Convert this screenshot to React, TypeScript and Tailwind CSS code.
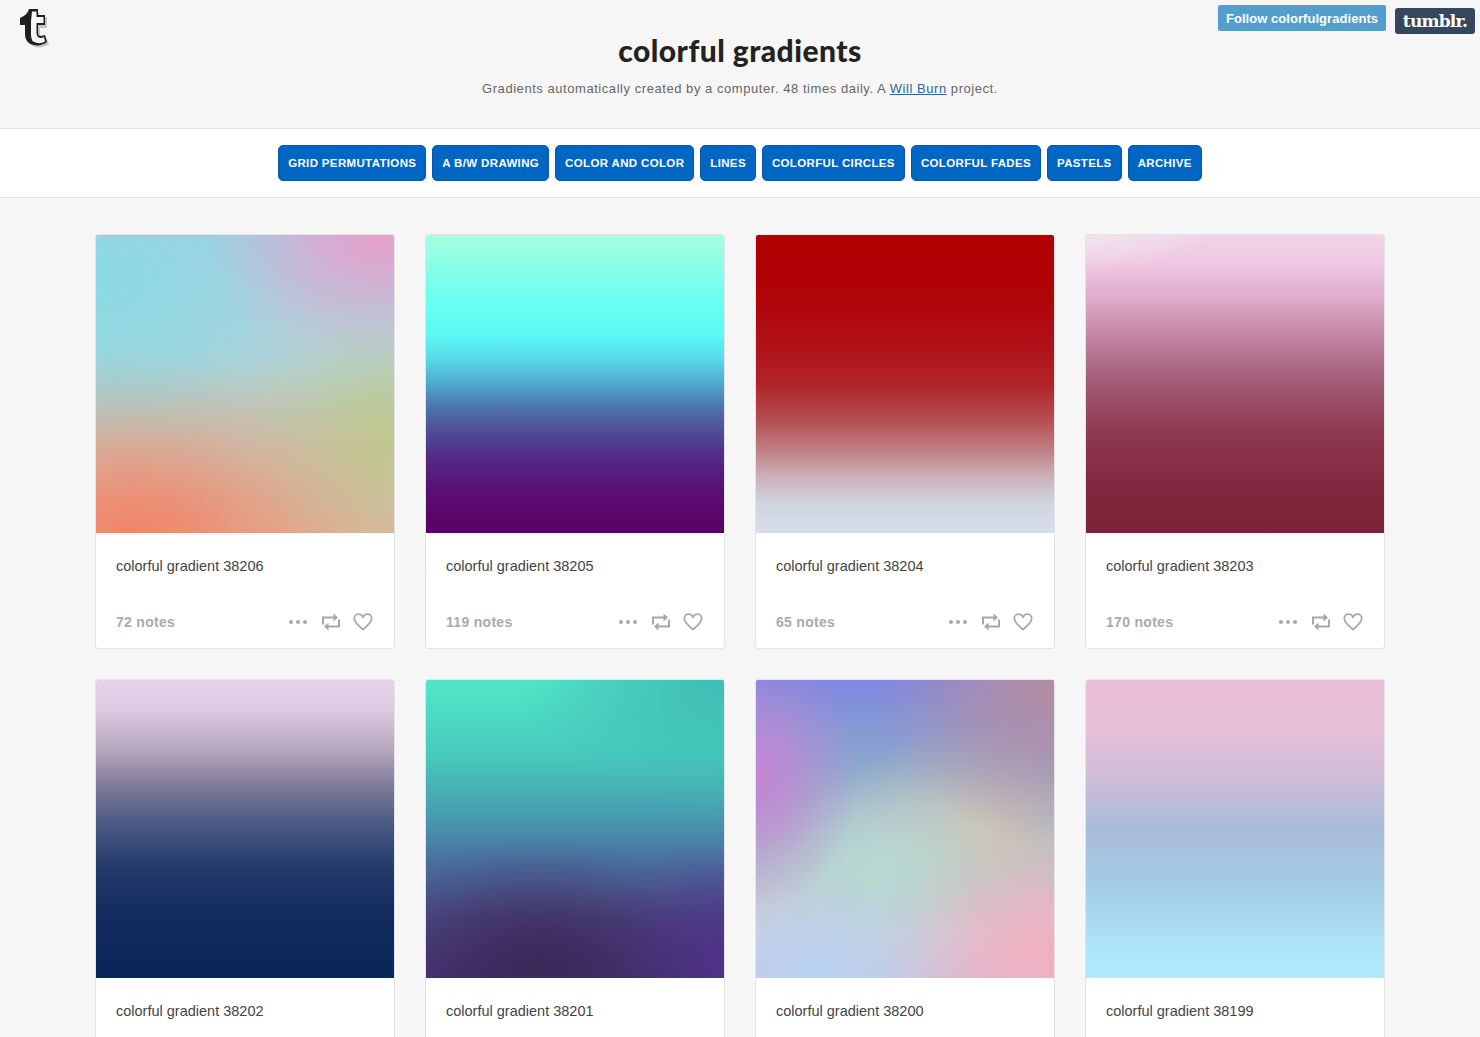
const navItems = [
  "GRID PERMUTATIONS",
  "A B/W DRAWING",
  "COLOR AND COLOR",
  "LINES",
  "COLORFUL CIRCLES",
  "COLORFUL FADES",
  "PASTELS",
  "ARCHIVE",
];

const posts = [
  {
    id: 38206,
    notes: "72 notes",
    bg: "bg-[radial-gradient(ellipse_110%_66%_at_12%_100%,#f2846aff_0%,#f2846ac8_20%,#f2846a88_38%,#f2846a48_56%,#f2846a1c_74%,#f2846a06_90%,#f2846a00_100%),radial-gradient(ellipse_60%_45%_at_95%_0%,#e6a0cdff_0%,#e6a0cdb0_30%,#e6a0cd60_55%,#e6a0cd20_80%,#e6a0cd00_100%),radial-gradient(ellipse_55%_45%_at_100%_68%,#bfc88eff_0%,#bfc88eb0_30%,#bfc88e60_55%,#bfc88e20_80%,#bfc88e00_100%),radial-gradient(ellipse_70%_60%_at_5%_15%,#8bd9e2ff_0%,#8bd9e2a0_50%,#8bd9e230_80%,#8bd9e200_100%),linear-gradient(180deg,#aec9e0_0%,#b0d2d8_40%,#bcccc0_60%,#c8c8b4_78%,#d8bca0_100%)]",
  },
  {
    id: 38205,
    notes: "119 notes",
    bg: "bg-[linear-gradient(180deg,#a8ffe0_0%,#84ffe8_12%,#66fff2_24%,#5cf8f4_34%,#58d8e8_42%,#4fa8cc_50%,#4c78b0_57%,#4f5098_65%,#522c86_74%,#590f72_86%,#5b0063_100%)]",
  },
  {
    id: 38204,
    notes: "65 notes",
    bg: "bg-[linear-gradient(180deg,#b10000_0%,#b00408_20%,#b0121a_38%,#b02428_50%,#b44e52_62%,#c07e84_72%,#cbb0b8_81%,#d0d4df_90%,#d6e0ea_100%)]",
  },
  {
    id: 38203,
    notes: "170 notes",
    bg: "bg-[radial-gradient(ellipse_40%_12%_at_0%_0%,#f1e4ec_0%,#f1e4ec00_100%),linear-gradient(180deg,#f0d4e8_0%,#efc6e1_10%,#dcaac8_22%,#bd7f9c_36%,#a05a74_50%,#8f3a52_66%,#80283f_84%,#7d2339_100%)]",
  },
  {
    id: 38202,
    notes: "88 notes",
    bg: "bg-[linear-gradient(180deg,#e6d2e8_0%,#dcc8e0_10%,#b3a5bc_24%,#7c7a98_36%,#4c5a84_48%,#253c6c_62%,#122c5f_78%,#0a2658_100%)]",
  },
  {
    id: 38201,
    notes: "94 notes",
    bg: "bg-[radial-gradient(ellipse_65%_45%_at_38%_98%,#3c2858ff_0%,#3c2858c0_28%,#3c285878_50%,#3c285830_72%,#3c28580a_90%,#3c285800_100%),radial-gradient(ellipse_50%_40%_at_100%_95%,#503288ff_0%,#503288b0_35%,#50328850_65%,#50328818_85%,#50328800_100%),radial-gradient(ellipse_70%_45%_at_100%_0%,#40bcb4ff_0%,#40bcb4a0_45%,#40bcb430_80%,#40bcb400_100%),linear-gradient(180deg,#52e6c8_0%,#46ccbc_25%,#489cb0_45%,#4a6c9c_62%,#4a4a84_80%,#46357c_100%)]",
  },
  {
    id: 38200,
    notes: "101 notes",
    bg: "bg-[radial-gradient(ellipse_60%_40%_at_100%_90%,#f2b0c0ff_0%,#f2b0c0c0_28%,#f2b0c070_52%,#f2b0c028_76%,#f2b0c000_100%),radial-gradient(ellipse_35%_45%_at_0%_32%,#c484d4ff_0%,#c484d4a0_40%,#c484d440_72%,#c484d400_100%),radial-gradient(ellipse_60%_35%_at_20%_100%,#b8d4f2ff_0%,#b8d4f2b0_40%,#b8d4f250_70%,#b8d4f200_100%),radial-gradient(ellipse_50%_38%_at_42%_65%,#b8dad2ff_0%,#b8dad2b0_35%,#b8dad250_65%,#b8dad218_85%,#b8dad200_100%),radial-gradient(ellipse_60%_50%_at_100%_5%,#b48ea4ff_0%,#b48ea4b0_40%,#b48ea450_70%,#b48ea400_100%),radial-gradient(ellipse_50%_38%_at_75%_52%,#d0c4b4ff_0%,#d0c4b490_40%,#d0c4b430_75%,#d0c4b400_100%),linear-gradient(180deg,#7e88e0_0%,#8ca8cc_30%,#b0c0cc_58%,#d4cad8_85%,#d8bcd0_100%)]",
  },
  {
    id: 38199,
    notes: "76 notes",
    bg: "bg-[linear-gradient(180deg,#eabfd8_0%,#e8c0d8_15%,#d0bcd8_32%,#a8bcd8_50%,#a4cde8_70%,#aee4fa_90%,#b0eaff_100%)]",
  },
];

function TumblrT() {
  return (
    <svg width="52" height="50" viewBox="0 0 52 50">
      <path
        d="M30 12h9v5h8v11h-7v6c0 2 2 2 5 1l4 9c-4 3-9 4-13 3-6-1-8-5-8-11z"
        fill="#c4c4c4"
      />
      <path
        d="M20 18C25 16 28 13 29 9L38 9 38 15 45 15 45 25 38 25 38 33C38 36 40 37 45 35L47 42C43 45 38 46 34 45 28 44 25 40 25 34L25 25 20 25Z"
        fill="#1f1f1f"
      />
      <path
        d="M32 11.500L36.500 11.500 36.500 17 43.500 17 43.500 23 36.500 23 36.500 33C36.500 38 41 39 44 37L45 41.500C41 44 36 43.500 32.500 41 31 38 31 35 31 33L31 21Z"
        fill="#f6f6f6"
      />
    </svg>
  );
}

function Heart() {
  return (
    <svg width="20" height="20" viewBox="0 0 20 20" fill="none" stroke="#a8a8a8" strokeWidth="1.800">
      <path d="M10 17.500C4.500 13 1.300 10 1.300 6.500 1.300 4 3.200 2.200 5.500 2.200c1.900 0 3.500 1 4.500 2.900 1-1.900 2.600-2.900 4.500-2.900 2.300 0 4.200 1.800 4.200 4.300 0 3.500-3.200 6.500-8.700 11z" />
    </svg>
  );
}

function Reblog() {
  return (
    <svg width="20" height="20" viewBox="0 0 20 20" fill="none" stroke="#a8a8a8" strokeWidth="2">
      <path d="M2 12.500V5.500H13" />
      <path d="M18 7.500V14.500H7" />
      <path d="M12.500 1.500L17 5.500 12.500 9.500z" fill="#a8a8a8" stroke="none" />
      <path d="M7.500 10.500L3 14.500 7.500 18.500z" fill="#a8a8a8" stroke="none" />
    </svg>
  );
}

function Card({ post }: { post: (typeof posts)[number] }) {
  return (
    <div className="w-[300px] h-[415px] bg-white border border-[#e4e4e4] rounded-[3px] overflow-hidden">
      <div className={`h-[298px] ${post.bg}`} />
      <div className="px-5 pt-[24px] text-[14.500px] leading-[18px] text-[#444]">
        colorful gradient {post.id}
      </div>
      <div className="flex items-center justify-between pl-5 pr-[21px] mt-[37px] h-[20px]">
        <span className="text-[14px] font-bold tracking-[0.3px] text-[#aaa]">{post.notes}</span>
        <div className="flex items-center">
          <div className="flex gap-[3px] mr-[14px]">
            <span className="w-[4px] h-[4px] rounded-full bg-[#a8a8a8]" />
            <span className="w-[4px] h-[4px] rounded-full bg-[#a8a8a8]" />
            <span className="w-[4px] h-[4px] rounded-full bg-[#a8a8a8]" />
          </div>
          <Reblog />
          <span className="w-[12px]" />
          <Heart />
        </div>
      </div>
    </div>
  );
}

export default function App() {
  return (
    <div className="h-[1037px] overflow-hidden bg-[#f6f6f6] font-['Liberation_Sans',Arial,sans-serif]">
      <header className="relative h-[129px] border-b border-[#e2e2e2]">
        <div className="absolute left-0 top-0">
          <TumblrT />
        </div>
        <div className="absolute right-[5px] top-[5px] flex items-start gap-[9px]">
          <a className="h-[26px] w-[168px] pt-[2px] flex items-center justify-center rounded-[2px] bg-[#529ecc] text-white text-[13px] font-bold tracking-[0.05px]">
            Follow colorfulgradients
          </a>
          <a className="mt-[3px] h-[26px] w-[80px] pt-[2px] flex items-center justify-center rounded-[3px] bg-[#36465d] text-white text-[17px] font-bold font-['DejaVu_Serif',serif] tracking-[-0.8px]">
            tumblr.
          </a>
        </div>
        <h1 className="pt-[32px] text-center text-[30px] leading-[36px] font-black tracking-[0.45px] text-[#222] font-['Lato',sans-serif]">
          colorful gradients
        </h1>
        <p className="mt-[12px] text-center text-[13px] leading-[18px] tracking-[0.55px] text-[#666]">
          Gradients automatically created by a computer. 48 times daily. A{" "}
          <a className="text-[#2f63ad] underline">Will Burn</a> project.
        </p>
      </header>
      <nav className="h-[69px] bg-white border-b border-[#e2e2e2] flex items-center justify-center gap-[6px]">
        {navItems.map((item) => (
          <a
            key={item}
            className="h-[36px] px-[9px] pt-[2px] flex items-center rounded-[5px] bg-[#0066c4] border border-[#0a58a8] text-white text-[11.500px] tracking-[0.35px] font-bold"
          >
            {item}
          </a>
        ))}
      </nav>
      <main className="pt-[36px] flex justify-center">
        <div className="grid grid-cols-[300px_300px_300px_300px] gap-[30px]">
          {posts.map((post) => (
            <Card key={post.id} post={post} />
          ))}
        </div>
      </main>
    </div>
  );
}
